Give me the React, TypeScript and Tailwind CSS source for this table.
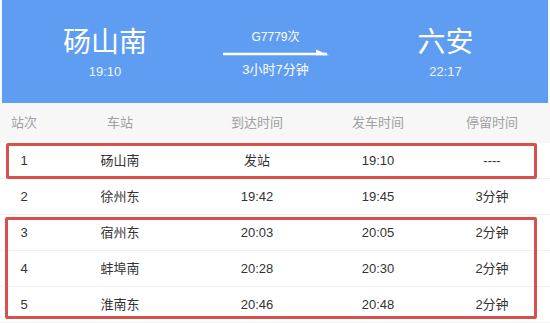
import React from 'react'

const STOPS = [
  { no: 1, name: '砀山南', arrive: '发站', depart: '19:10', stay: '----' },
  { no: 2, name: '徐州东', arrive: '19:42', depart: '19:45', stay: '3分钟' },
  { no: 3, name: '宿州东', arrive: '20:03', depart: '20:05', stay: '2分钟' },
  { no: 4, name: '蚌埠南', arrive: '20:28', depart: '20:30', stay: '2分钟' },
  { no: 5, name: '淮南东', arrive: '20:46', depart: '20:48', stay: '2分钟' },
]

const COLS = 'grid grid-cols-[48px_144px_130px_112px_1fr] items-center text-center'

function Station({ name, time }: { name: string; time: string }) {
  return (
    <div className="flex flex-col items-center pt-[29px] text-white">
      <div className="text-[28px] leading-[28px]">{name}</div>
      <div className="mt-[7px] text-[13px] leading-[16px] text-[#eef5ff]">{time}</div>
    </div>
  )
}

export default function App() {
  return (
    <div className="w-[550px] h-[323px] overflow-hidden bg-[#f6fafb] font-['Liberation_Sans','Noto_Sans_CJK_SC',sans-serif]">
      {/* train summary */}
      <div className="mx-[2px] h-[103px] bg-[#5f9df2] grid grid-cols-[206px_135px_1fr]">
        <Station name="砀山南" time="19:10" />
        <div className="flex flex-col items-center pt-[29px] text-white">
          <div className="text-[12px] leading-[16px]">G7779次</div>
          <svg width="106" height="12" viewBox="0 0 106 12" className="mt-[2px]">
            <line x1="0" y1="7" x2="104" y2="7" stroke="white" strokeWidth="2.5" />
            <polygon points="93,2.5 106,8.2 93,8.2" fill="white" />
          </svg>
          <div className="mt-[3px] text-[13px] leading-[16px]">3小时7分钟</div>
        </div>
        <Station name="六安" time="22:17" />
      </div>

      {/* stops table */}
      <div className="relative bg-white">
        <div className={`${COLS} h-[40px] bg-[#f7f7f7] text-[13px] text-[#a0a0a0]`}>
          <span>站次</span>
          <span>车站</span>
          <span>到达时间</span>
          <span>发车时间</span>
          <span>停留时间</span>
        </div>
        {STOPS.map(s => (
          <div key={s.no} className={`${COLS} h-[36px] border-b border-[#f1f1f1] text-[13px] text-[#333]`}>
            <span>{s.no}</span>
            <span>{s.name}</span>
            <span>{s.arrive}</span>
            <span>{s.depart}</span>
            <span>{s.stay}</span>
          </div>
        ))}

        {/* highlight boxes */}
        <div className="absolute left-[6px] top-[40px] w-[531px] h-[36px] border-[3px] border-[#d6504d] rounded-[2px]" />
        <div className="absolute left-[5px] top-[114px] w-[532px] h-[102px] border-[3px] border-[#d6504d] rounded-[2px]" />
      </div>
    </div>
  )
}
